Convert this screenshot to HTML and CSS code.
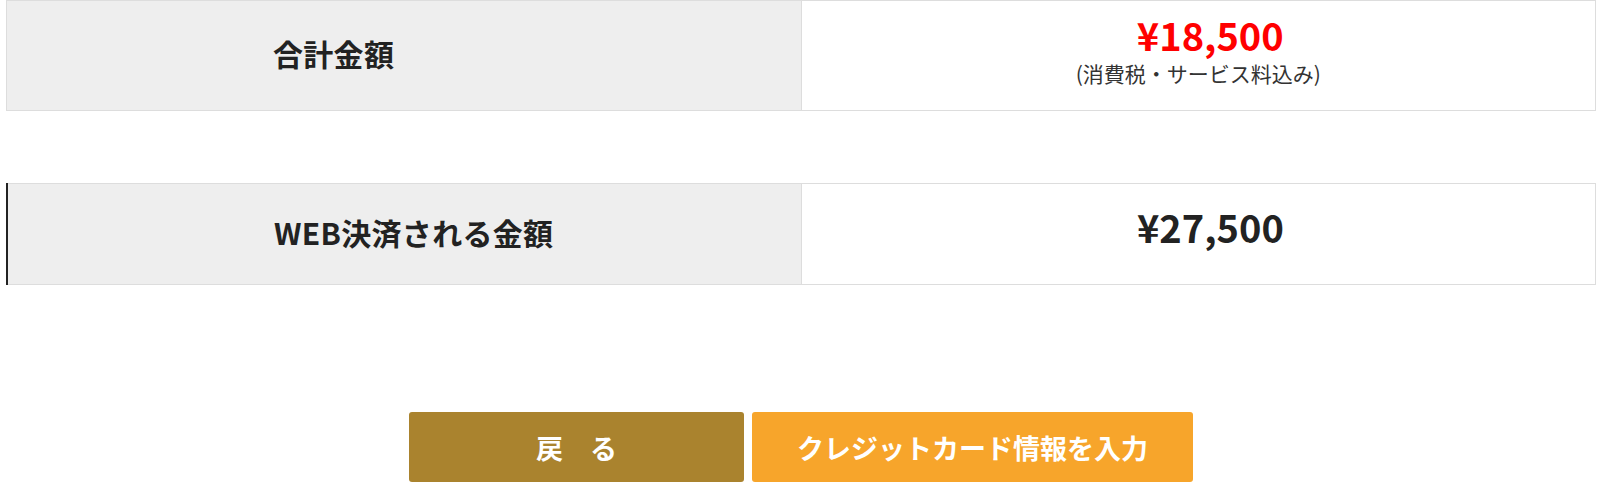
FILE: index.html
```html
<!DOCTYPE html>
<html lang="ja">
<head>
  <meta charset="UTF-8">
  <meta name="viewport" content="width=device-width, initial-scale=1.0">
  <title>お支払い金額の確認</title>
  <link rel="stylesheet" href="styles.css">
</head>
<body>
  <div class="wrap">
    <table class="amount-table">
      <tr>
        <th>合計金額</th>
        <td>
          <div class="price price-total">¥18,500</div>
          <div class="note">(消費税・サービス料込み)</div>
        </td>
      </tr>
    </table>

    <table class="amount-table amount-web">
      <tr>
        <th>WEB決済される金額</th>
        <td>
          <div class="price">¥27,500</div>
        </td>
      </tr>
    </table>

    <div class="buttons">
      <button class="btn btn-back" type="button">戻　る</button>
      <button class="btn btn-next" type="button">クレジットカード情報を入力</button>
    </div>
  </div>
</body>
</html>
```

FILE: styles.css
```css
body {
  margin: 0;
  font-family: "Noto Sans CJK JP", "Noto Sans", sans-serif;
  color: #222;
  background: #fff;
}
.wrap { width: 1590px; margin-left: 6px; }

.amount-table {
  width: 100%;
  border-collapse: collapse;
  table-layout: fixed;
}
.amount-table th,
.amount-table td {
  box-sizing: border-box;
  border: 1px solid #ddd;
  width: 50%;
}
.amount-table th {
  background: #eeeeee;
  text-align: left;
  padding-left: 266px;
  padding-bottom: 6px;
  font-size: 30px;
  font-weight: bold;
  letter-spacing: 0.3px;
  height: 110px;
}
.amount-table td {
  text-align: center;
  background: #fff;
  padding-bottom: 10px;
}
.amount-web { margin-top: 72px; }
.amount-web th {
  height: 101px;
  border-left: 2px solid #222;
}
.amount-web td { padding-bottom: 16px; }

.price {
  font-size: 38px;
  font-weight: bold;
  line-height: 1.1;
  padding-left: 24px;
}
.price-total { color: #f00; }
.note {
  font-size: 21px;
  color: #333;
  margin-top: 2px;
}

.buttons {
  display: flex;
  justify-content: center;
  gap: 8px;
  margin-top: 127px;
}
.btn {
  height: 70px;
  border: none;
  border-radius: 3px;
  color: #fff;
  font-family: inherit;
  font-size: 27px;
  font-weight: bold;
  cursor: pointer;
}
.btn-back { width: 335px; background: #aa832e; }
.btn-next { width: 441px; background: #f7a52b; }
```
